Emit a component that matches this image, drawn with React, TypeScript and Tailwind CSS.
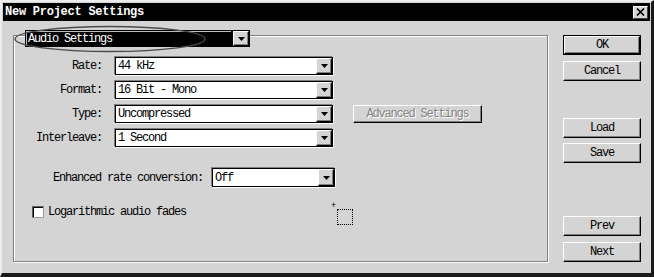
import React from "react";

const mono = "whitespace-nowrap font-['Liberation_Mono','Courier_New',monospace] text-[12px] tracking-[-1.2px]";

function Arrow() {
  return (
    <div className="flex h-full w-[16px] shrink-0 items-center justify-center border border-t-white border-l-white border-b-black border-r-black bg-[#d4d4d4] shadow-[inset_-1px_-1px_0_#808080]">
      <svg width="7" height="4" viewBox="0 0 7 4">
        <polygon points="0,0 7,0 3.5,4" fill="#000" />
      </svg>
    </div>
  );
}

function Select({ value, className }: { value: string; className: string }) {
  return (
    <div
      className={`flex shrink-0 items-stretch border border-black bg-white shadow-[-1px_-1px_0_#808080,1px_1px_0_#fff] ${className}`}
    >
      <div className={`flex flex-1 items-center pl-[2px] text-black ${mono}`}>{value}</div>
      <Arrow />
    </div>
  );
}

function Button({ label, isDefault = false, className = "" }: { label: string; isDefault?: boolean; className?: string }) {
  if (isDefault) {
    return (
      <div className={`h-[20px] w-[78px] border border-black ${className}`}>
        <div className={`flex h-full w-full items-center justify-center border border-t-white border-l-white border-b-black border-r-black shadow-[inset_-1px_-1px_0_#808080] text-black ${mono}`}>
          {label}
        </div>
      </div>
    );
  }
  return (
    <div
      className={`flex h-[20px] w-[78px] items-center justify-center border border-t-white border-l-white border-b-black border-r-black shadow-[inset_-1px_-1px_0_#808080] text-black ${mono} ${className}`}
    >
      {label}
    </div>
  );
}

function Row({ label, value, children }: { label: string; value: string; children?: React.ReactNode }) {
  return (
    <div className="flex h-[18px] items-center">
      <div className={`w-[88px] text-right text-black ${mono}`}>{label}</div>
      <Select value={value} className="ml-[13px] h-[18px] w-[218px]" />
      {children}
    </div>
  );
}

export default function App() {
  return (
    <div className="relative flex h-[277px] w-[654px] flex-col overflow-hidden border-t-2 border-l-2 border-r-[3px] border-b-[4px] border-t-[#ececec] border-l-[#ececec] border-r-[#1a1a1a] border-b-[#1a1a1a] bg-[#d4d4d4]">
      {/* title bar */}
      <div className="mx-px mt-px flex h-[18px] items-center justify-between bg-black pl-[2px] pr-[2px]">
        <span className="font-['Liberation_Mono','Courier_New',monospace] text-[12px] font-bold tracking-[-0.25px] text-white">
          New Project Settings
        </span>
        <div className="flex h-[13px] w-[15px] items-center justify-center border border-t-white border-l-white border-b-[#404040] border-r-[#404040] bg-[#d4d4d4]">
          <svg width="9" height="8" viewBox="0 0 9 8">
            <path d="M1 0.5L8 7.5M8 0.5L1 7.5" stroke="#000" strokeWidth="1.6" />
          </svg>
        </div>
      </div>

      <div className="mt-[14px] flex pl-[11px]">
        {/* group box */}
        <div className="relative flex h-[227px] w-[535px] flex-col border border-[#808080] shadow-[inset_1px_1px_0_#fff,1px_1px_0_#fff]">
          <div className="-mt-[6px] ml-[11px] flex h-[17px] w-[225px] items-stretch">
            <div className={`flex flex-1 items-center border border-black bg-black pl-[2px] text-white shadow-[inset_1px_1px_0_#bdbdbd] ${mono}`}>
              Audio Settings
            </div>
            <div className="border border-black">
              <Arrow />
            </div>
          </div>

          <div className="mt-[10px] flex flex-col gap-[6px]">
            <Row label="Rate:" value="44 kHz" />
            <Row label="Format:" value="16 Bit - Mono" />
            <Row label="Type:" value="Uncompressed">
              <div className="ml-[20px] flex h-[18px] w-[129px] items-center justify-center border border-t-white border-l-white border-b-black border-r-black shadow-[inset_-1px_-1px_0_#808080]">
                <span className={`text-[#858585] [text-shadow:1px_1px_0_#fff] ${mono}`}>Advanced Settings</span>
              </div>
            </Row>
            <Row label="Interleave:" value="1 Second" />
          </div>

          <div className="ml-[39px] mt-[21px] flex h-[19px] items-center">
            <span className={`w-[150px] text-black ${mono}`}>Enhanced rate conversion:</span>
            <Select value="Off" className="ml-[9px] h-[19px] w-[123px]" />
          </div>

          <div className="ml-[18px] mt-[19px] flex h-[12px] items-center">
            <div className="h-[12px] w-[12px] border border-t-[#606060] border-l-[#606060] border-b-[#9a9a9a] border-r-[#9a9a9a] bg-white shadow-[inset_1px_1px_0_#000]" />
            <span className={`ml-[4px] text-black ${mono}`}>Logarithmic audio fades</span>
          </div>

          <span className="absolute left-[317px] top-[164px] text-[9px] leading-none text-black">+</span>
          <div className="absolute left-[323px] top-[173px] h-[16px] w-[16px] border border-dotted border-black" />
        </div>

        {/* button column */}
        <div className="ml-[15px] flex flex-col">
          <Button label="OK" isDefault />
          <Button label="Cancel" className="mt-[6px]" />
          <Button label="Load" className="mt-[37px]" />
          <Button label="Save" className="mt-[5px]" />
          <Button label="Prev" className="mt-[53px]" />
          <Button label="Next" className="mt-[6px]" />
        </div>
      </div>

      {/* hand-drawn ellipse annotation */}
      <svg className="absolute left-[10px] top-[21px]" width="200" height="32" viewBox="0 0 200 32">
        <ellipse cx="98" cy="16" rx="95" ry="12.5" fill="none" stroke="#4a4a4a" strokeWidth="1.4" />
      </svg>
    </div>
  );
}
